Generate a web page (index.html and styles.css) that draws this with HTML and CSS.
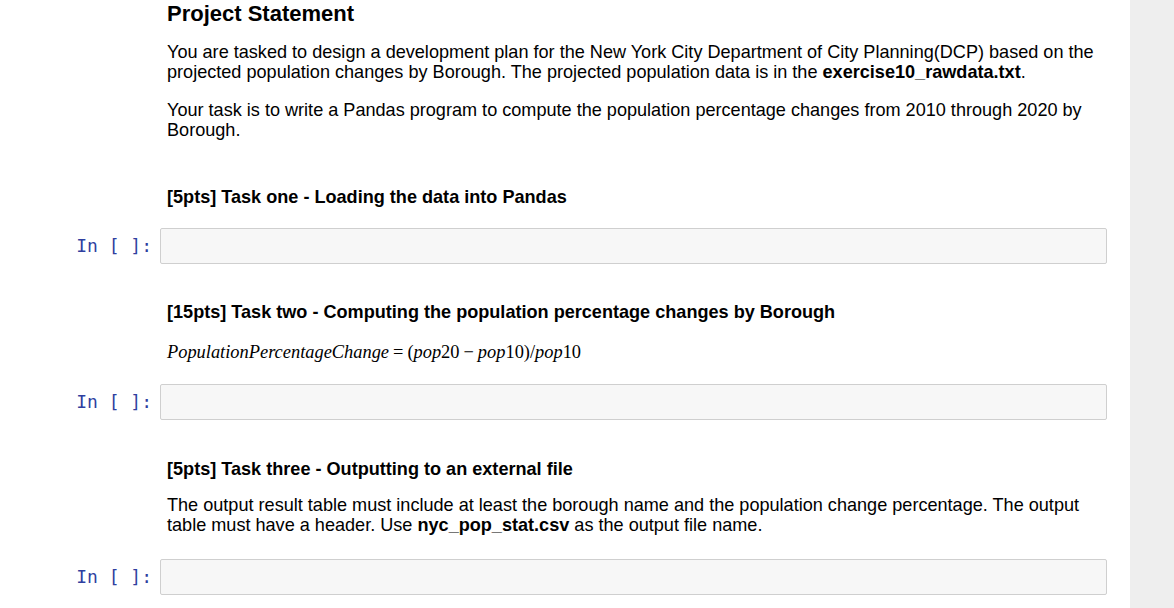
FILE: index.html
```html
<!DOCTYPE html>
<html>
<head>
<meta charset="utf-8">
<link rel="stylesheet" href="styles.css">
</head>
<body>
<div class="page">
  <div class="notebook">
    <div class="cell md first">
      <div class="prompt"></div>
      <div class="md-body">
        <h2 class="title">Project Statement</h2>
        <p class="para">You are tasked to design a development plan for the New York City Department of City Planning(DCP) based on the projected population changes by Borough. The projected population data is in the <b>exercise10_rawdata.txt</b>.</p>
        <p class="para">Your task is to write a Pandas program to compute the population percentage changes from 2010 through 2020 by Borough.</p>
      </div>
    </div>
    <div class="cell md task1">
      <div class="prompt"></div>
      <div class="md-body">
        <p class="para"><b>[5pts] Task one - Loading the data into Pandas</b></p>
      </div>
    </div>
    <div class="cell code">
      <div class="prompt in">In&nbsp;[&nbsp;]:</div>
      <div class="input"></div>
    </div>
    <div class="cell md task2">
      <div class="prompt"></div>
      <div class="md-body">
        <p class="para"><b>[15pts] Task two - Computing the population percentage changes by Borough</b></p>
        <p class="math"><i>PopulationPercentageChange</i><span class="rel">=</span>(<i>pop</i>20<span class="bin">−</span><i>pop</i>10)/<i>pop</i>10</p>
      </div>
    </div>
    <div class="cell code">
      <div class="prompt in">In&nbsp;[&nbsp;]:</div>
      <div class="input"></div>
    </div>
    <div class="cell md task3">
      <div class="prompt"></div>
      <div class="md-body">
        <p class="para"><b>[5pts] Task three - Outputting to an external file</b></p>
        <p class="para">The output result table must include at least the borough name and the population change percentage. The output table must have a header. Use <b>nyc_pop_stat.csv</b> as the output file name.</p>
      </div>
    </div>
    <div class="cell code">
      <div class="prompt in">In&nbsp;[&nbsp;]:</div>
      <div class="input"></div>
    </div>
  </div>
  <div class="scroll"></div>
</div>
</body>
</html>
```

FILE: styles.css
```css
html, body {
  margin: 0;
  padding: 0;
  background: #ffffff;
  height: 608px;
  overflow: hidden;
}
.page {
  display: flex;
  height: 608px;
}
.notebook {
  width: 1130px;
  background: #ffffff;
  font-family: "Liberation Sans", Arial, sans-serif;
  color: #000;
}
.scroll {
  flex: 1;
  background: #eeeeee;
}
.cell {
  display: flex;
  align-items: flex-start;
}
.prompt {
  width: 152px;
  flex: none;
  margin-right: 8px;
  text-align: right;
}
.prompt.in {
  font-family: "DejaVu Sans Mono", monospace;
  font-size: 18px;
  color: #303f9f;
  line-height: 36px;
}
.md-body {
  width: 935px;
  padding-left: 7px;
  font-size: 18.1px;
  line-height: 20px;
}
.title {
  margin: 0;
  font-size: 22px;
  line-height: 28px;
  font-weight: bold;
}
.para {
  margin: 0 0 18px 0;
}
.first .para:first-of-type {
  margin-top: 14px;
}
.task1 {
  margin-top: 29px;
}
.task1 .para {
  margin-bottom: 21px;
}
.code .input {
  width: 945px;
  height: 34px;
  background: #f7f7f7;
  border: 1px solid #cfcfcf;
  border-radius: 2px;
}
.task2 {
  margin-top: 38px;
}
.task2 .para {
  margin-bottom: 20px;
}
.math {
  margin: 0 0 22px 0;
  font-family: "Liberation Serif", "Times New Roman", serif;
  font-size: 18.4px;
  line-height: 20px;
}
.rel {
  margin: 0 4px;
}
.bin {
  margin: 0 4px;
}
.task3 {
  margin-top: 39px;
}
.task3 .para:first-child {
  margin-bottom: 16px;
}
.task3 .para:last-child {
  margin-bottom: 24px;
}
```
